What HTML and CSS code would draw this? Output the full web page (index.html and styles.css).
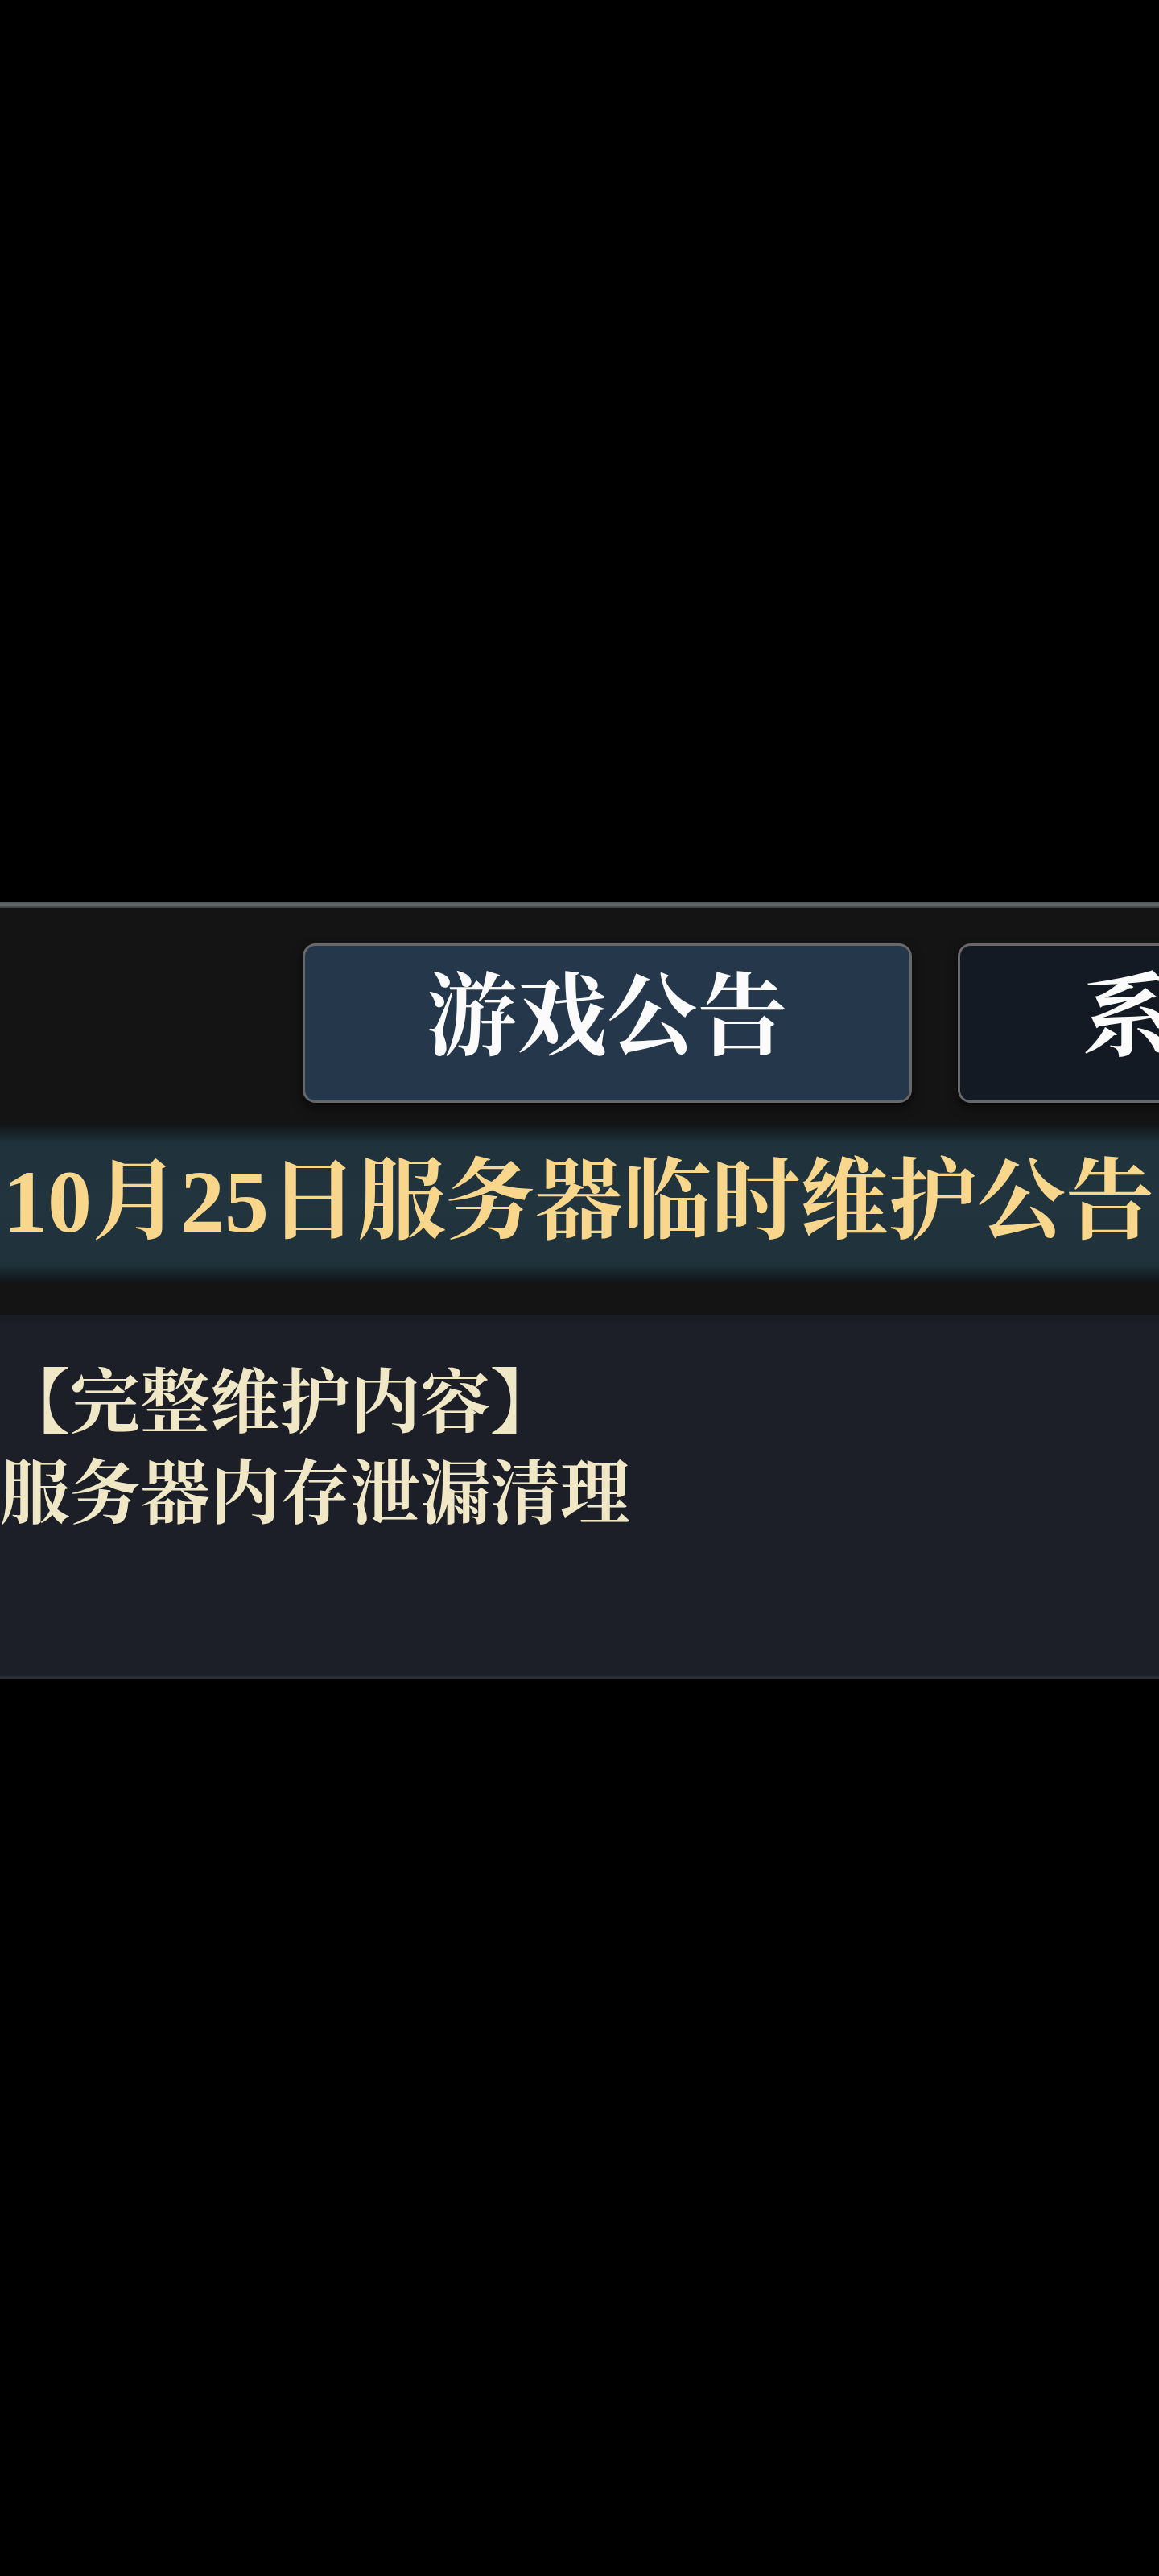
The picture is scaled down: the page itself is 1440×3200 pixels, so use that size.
FILE: index.html
```html
<!DOCTYPE html>
<html lang="zh-CN">
<head>
<meta charset="utf-8">
<title>游戏公告</title>
<link rel="stylesheet" href="styles.css">
</head>
<body>
<div class="spacer"></div>
<section class="panel">
  <div class="panel-edge"></div>
  <nav class="tabs">
    <div class="tab tab-active">游戏公告</div>
    <div class="tab">系统公告</div>
  </nav>
  <h1 class="title-bar"><span class="title-text">10月25日服务器临时维护公告</span></h1>
  <div class="content">
    <p class="line">【完整维护内容】</p>
    <p class="line">服务器内存泄漏清理</p>
  </div>
  <div class="panel-bottom"></div>
</section>
</body>
</html>
```
FILE: styles.css
```css
html, body {
  margin: 0;
  padding: 0;
  background: #000;
}
body {
  width: 1440px;
  overflow: hidden;
  font-family: "Liberation Serif", "Noto Serif CJK SC", "Noto Sans CJK SC", serif;
  font-weight: 700;
}
.spacer {
  height: 1120px;
}
.panel {
  background: #141414;
  overflow: hidden;
  width: 1440px;
}
.panel-edge {
  height: 8px;
  background: linear-gradient(#4a4f52, #656a6c 50%, #3a3d3f);
}
.tabs {
  display: flex;
  gap: 57px;
  padding: 44px 0 0 376px;
  height: 198px;
}
.tab {
  flex: 0 0 757px;
  box-sizing: border-box;
  height: 198px;
  border: 3px solid #6a6769;
  border-radius: 16px;
  background: #131a24;
  color: #fbfbfb;
  font-size: 112px;
  line-height: 1;
  display: flex;
  align-items: center;
  justify-content: center;
  padding-bottom: 14px;
  box-shadow: 0 6px 14px rgba(0,0,0,0.55);
  white-space: nowrap;
}
.tab-active {
  background: #25374a;
}
.title-bar {
  margin: 27px 0 0;
  height: 196px;
  background: linear-gradient(#0f1619 0, #1f313a 22px, #22353f 50%, #1f313a calc(100% - 22px), #101518 100%);
  display: flex;
  align-items: center;
  padding-left: 4px;
  font-size: 110px;
  font-weight: 700;
  line-height: 1;
  color: #f8d68c;
  white-space: nowrap;
}
.title-text {
  display: block;
  padding-bottom: 4px;
}
.title-text {
  letter-spacing: 0;
}
.content {
  margin-top: 40px;
  height: 449px;
  box-sizing: border-box;
  background: linear-gradient(#181b22 0, #1c1f28 14px);
  padding: 54px 0 0 0;
  color: #efe7c6;
  font-size: 87px;
  line-height: 113px;
}
.line {
  margin: 0;
  white-space: nowrap;
}
.panel-bottom {
  height: 4px;
  background: #2b2e31;
}
```
